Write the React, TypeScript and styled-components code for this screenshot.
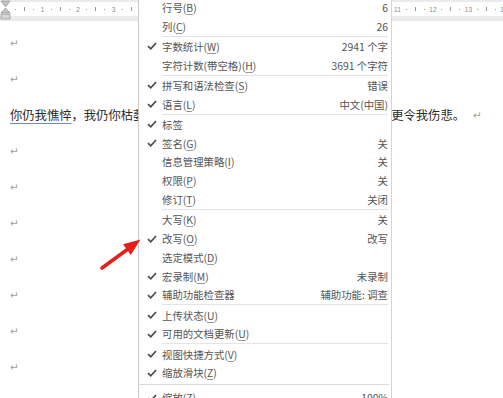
import React from 'react';
import styled, { createGlobalStyle } from 'styled-components';

const GlobalStyle = createGlobalStyle`
  html, body {
    margin: 0;
    padding: 0;
    background: #ffffff;
    overflow: hidden;
  }
  body {
    font-family: "Noto Sans CJK SC", "Noto Sans", sans-serif;
  }
`;

type MenuItem =
  | { kind: 'row'; label: string; keyChar?: string; value?: string; checked?: boolean }
  | { kind: 'sep' }
  | { kind: 'rule' };

const items: MenuItem[] = [
  { kind: 'row', label: '行号', keyChar: 'B', value: '6' },
  { kind: 'row', label: '列', keyChar: 'C', value: '26' },
  { kind: 'sep' },
  { kind: 'row', label: '字数统计', keyChar: 'W', value: '2941 个字', checked: true },
  { kind: 'row', label: '字符计数(带空格)', keyChar: 'H', value: '3691 个字符' },
  { kind: 'sep' },
  { kind: 'row', label: '拼写和语法检查', keyChar: 'S', value: '错误', checked: true },
  { kind: 'row', label: '语言', keyChar: 'L', value: '中文(中国)', checked: true },
  { kind: 'sep' },
  { kind: 'row', label: '标签', checked: true },
  { kind: 'row', label: '签名', keyChar: 'G', value: '关', checked: true },
  { kind: 'row', label: '信息管理策略', keyChar: 'I', value: '关' },
  { kind: 'row', label: '权限', keyChar: 'P', value: '关' },
  { kind: 'row', label: '修订', keyChar: 'T', value: '关闭' },
  { kind: 'sep' },
  { kind: 'row', label: '大写', keyChar: 'K', value: '关' },
  { kind: 'row', label: '改写', keyChar: 'O', value: '改写', checked: true },
  { kind: 'row', label: '选定模式', keyChar: 'D' },
  { kind: 'row', label: '宏录制', keyChar: 'M', value: '未录制', checked: true },
  { kind: 'row', label: '辅助功能检查器', value: '辅助功能: 调查', checked: true },
  { kind: 'sep' },
  { kind: 'row', label: '上传状态', keyChar: 'U', checked: true },
  { kind: 'row', label: '可用的文档更新', keyChar: 'U', checked: true },
  { kind: 'sep' },
  { kind: 'row', label: '视图快捷方式', keyChar: 'V', checked: true },
  { kind: 'row', label: '缩放滑块', keyChar: 'Z', checked: true },
  { kind: 'rule' },
  { kind: 'row', label: '缩放', keyChar: 'Z', value: '100%', checked: true },
];

const QUARTER = 8.875;
const TICKS = Array.from({ length: 57 }, (_, i) => i);

function CheckIcon() {
  return (
    <svg width="10" height="8" viewBox="0 0 10 8">
      <path d="M1 4.2 L3.8 6.8 L9 1" fill="none" stroke="#4a4a4a" strokeWidth="1.7" />
    </svg>
  );
}

function IndentMarker() {
  return (
    <svg width="11" height="21" viewBox="0 0 11 21">
      <path d="M1 1 H10 L5.5 7 Z" fill="#c4c4c4" stroke="#9a9a9a" strokeWidth="0.8" />
      <path d="M5.5 8 L10 13 H1 Z" fill="#c4c4c4" stroke="#9a9a9a" strokeWidth="0.8" />
      <rect x="1" y="14" width="9" height="5" fill="#d6d6d6" stroke="#9a9a9a" strokeWidth="0.8" />
    </svg>
  );
}

function RedArrow() {
  return (
    <svg width="503" height="398" viewBox="0 0 503 398">
      <line x1="102" y1="268" x2="128" y2="249" stroke="#e3201c" strokeWidth="3.6" strokeLinecap="round" />
      <path d="M140.5 239.5 L123 244.2 L130.8 255 Z" fill="#e3201c" />
    </svg>
  );
}

export default function App() {
  return (
    <>
      <GlobalStyle />
      <Page>
        <Ruler>
          <MarkerSlot>
            <IndentMarker />
          </MarkerSlot>
          <RulerStrip>
            {TICKS.map((i) => (
              <Tick key={i}>
                {i % 4 === 0 ? (i === 0 ? '' : i / 4) : i % 2 === 0 ? <Bar /> : <Dot />}
              </Tick>
            ))}
          </RulerStrip>
        </Ruler>

        <Doc>
          <Line><Mark>↵</Mark></Line>
          <Line><Mark>↵</Mark></Line>
          <Line>
            <Text>
              <Grammar>你仍我憔悴</Grammar>，我仍你枯萎，你若我欢喜，我若你欢颜，而你的冷漠，却更令我伤悲。
            </Text>
            <Mark>↵</Mark>
          </Line>
          <Line><Mark>↵</Mark></Line>
          <Line><Mark>↵</Mark></Line>
          <Line><Mark>↵</Mark></Line>
          <Line><Mark>↵</Mark></Line>
          <Line><Mark>↵</Mark></Line>
          <Line><Mark>↵</Mark></Line>
          <Line><Mark>↵</Mark></Line>
        </Doc>

        <Menu>
          {items.map((it, idx) => {
            if (it.kind === 'sep') return <Separator key={idx} />;
            if (it.kind === 'rule') return <Rule key={idx} />;
            return (
              <Row key={idx}>
                <CheckCell>{it.checked && <CheckIcon />}</CheckCell>
                <Label>
                  {it.label}
                  {it.keyChar && (
                    <>
                      (<Key>{it.keyChar}</Key>)
                    </>
                  )}
                </Label>
                {it.value && <Value>{it.value}</Value>}
              </Row>
            );
          })}
        </Menu>

        <ArrowLayer>
          <RedArrow />
        </ArrowLayer>
      </Page>
    </>
  );
}

const Page = styled.div`
  position: relative;
  width: 503px;
  height: 398px;
  overflow: hidden;
  background: #ffffff;
`;

const Ruler = styled.div`
  display: flex;
  height: 21px;
  background: #ebebeb;
  padding-top: 2px;
  box-sizing: border-box;
`;

const MarkerSlot = styled.div`
  width: 0;
  margin-top: -2px;
  position: relative;
  z-index: 1;
`;

const RulerStrip = styled.div`
  flex: 1;
  height: 14px;
  background: #ffffff;
  display: flex;
  align-items: center;
  padding-left: 2.56px;
  overflow: hidden;
`;

const Tick = styled.div`
  flex: 0 0 ${QUARTER}px;
  display: flex;
  justify-content: center;
  align-items: center;
  font-family: "Liberation Sans", Arial, sans-serif;
  font-size: 6.5px;
  color: #8a8a8a;
`;

const Dot = styled.span`
  width: 1px;
  height: 1px;
  background: #9a9a9a;
`;

const Bar = styled.span`
  width: 1px;
  height: 4px;
  background: #9a9a9a;
`;

const Doc = styled.div`
  display: flex;
  flex-direction: column;
  padding-top: 4px;
`;

const Line = styled.div`
  height: 36px;
  display: flex;
  align-items: center;
  padding-left: 10px;
  white-space: nowrap;
`;

const Mark = styled.span`
  font-family: "DejaVu Sans", sans-serif;
  font-size: 10.5px;
  color: #a0a0a0;
`;

const Text = styled.span`
  font-family: "Noto Sans CJK SC", sans-serif;
  font-size: 12.3px;
  color: #2a2a2a;
  margin-right: 8px;
`;

const Grammar = styled.span`
  text-decoration: underline;
  text-decoration-color: #6f8fc4;
  text-underline-offset: 3px;
`;

const Menu = styled.div`
  position: absolute;
  left: 138px;
  top: -2px;
  width: 254px;
  height: 420px;
  background: #ffffff;
  border-left: 1px solid #c9c9c9;
  border-right: 1px solid #d4d4d4;
  box-sizing: border-box;
  display: flex;
  flex-direction: column;
`;

const Row = styled.div`
  height: 18.8px;
  flex: 0 0 18.8px;
  display: flex;
  align-items: center;
  padding-right: 3px;
  font-size: 10.4px;
  color: #555555;
  white-space: nowrap;
`;

const CheckCell = styled.div`
  width: 23px;
  flex: 0 0 23px;
  display: flex;
  justify-content: center;
  padding-left: 2px;
  box-sizing: border-box;
`;

const Label = styled.span`
  flex: 1;
`;

const Key = styled.span`
  text-decoration: underline;
  text-decoration-color: #9a9a9a;
  text-underline-offset: 1.5px;
`;

const Value = styled.span`
  text-align: right;
`;

const Separator = styled.div`
  flex: 0 0 1.4px;
  margin-left: 23px;
  margin-right: 3px;
  border-top: 1px solid #e4e4e4;
  box-sizing: border-box;
`;

const Rule = styled.div`
  flex: 0 0 3px;
  border-top: 1px solid #dcdcdc;
  margin-top: 2px;
  margin-left: -1px;
  margin-right: 2px;
`;

const ArrowLayer = styled.div`
  position: absolute;
  left: 0;
  top: 0;
  pointer-events: none;
  line-height: 0;
`;
